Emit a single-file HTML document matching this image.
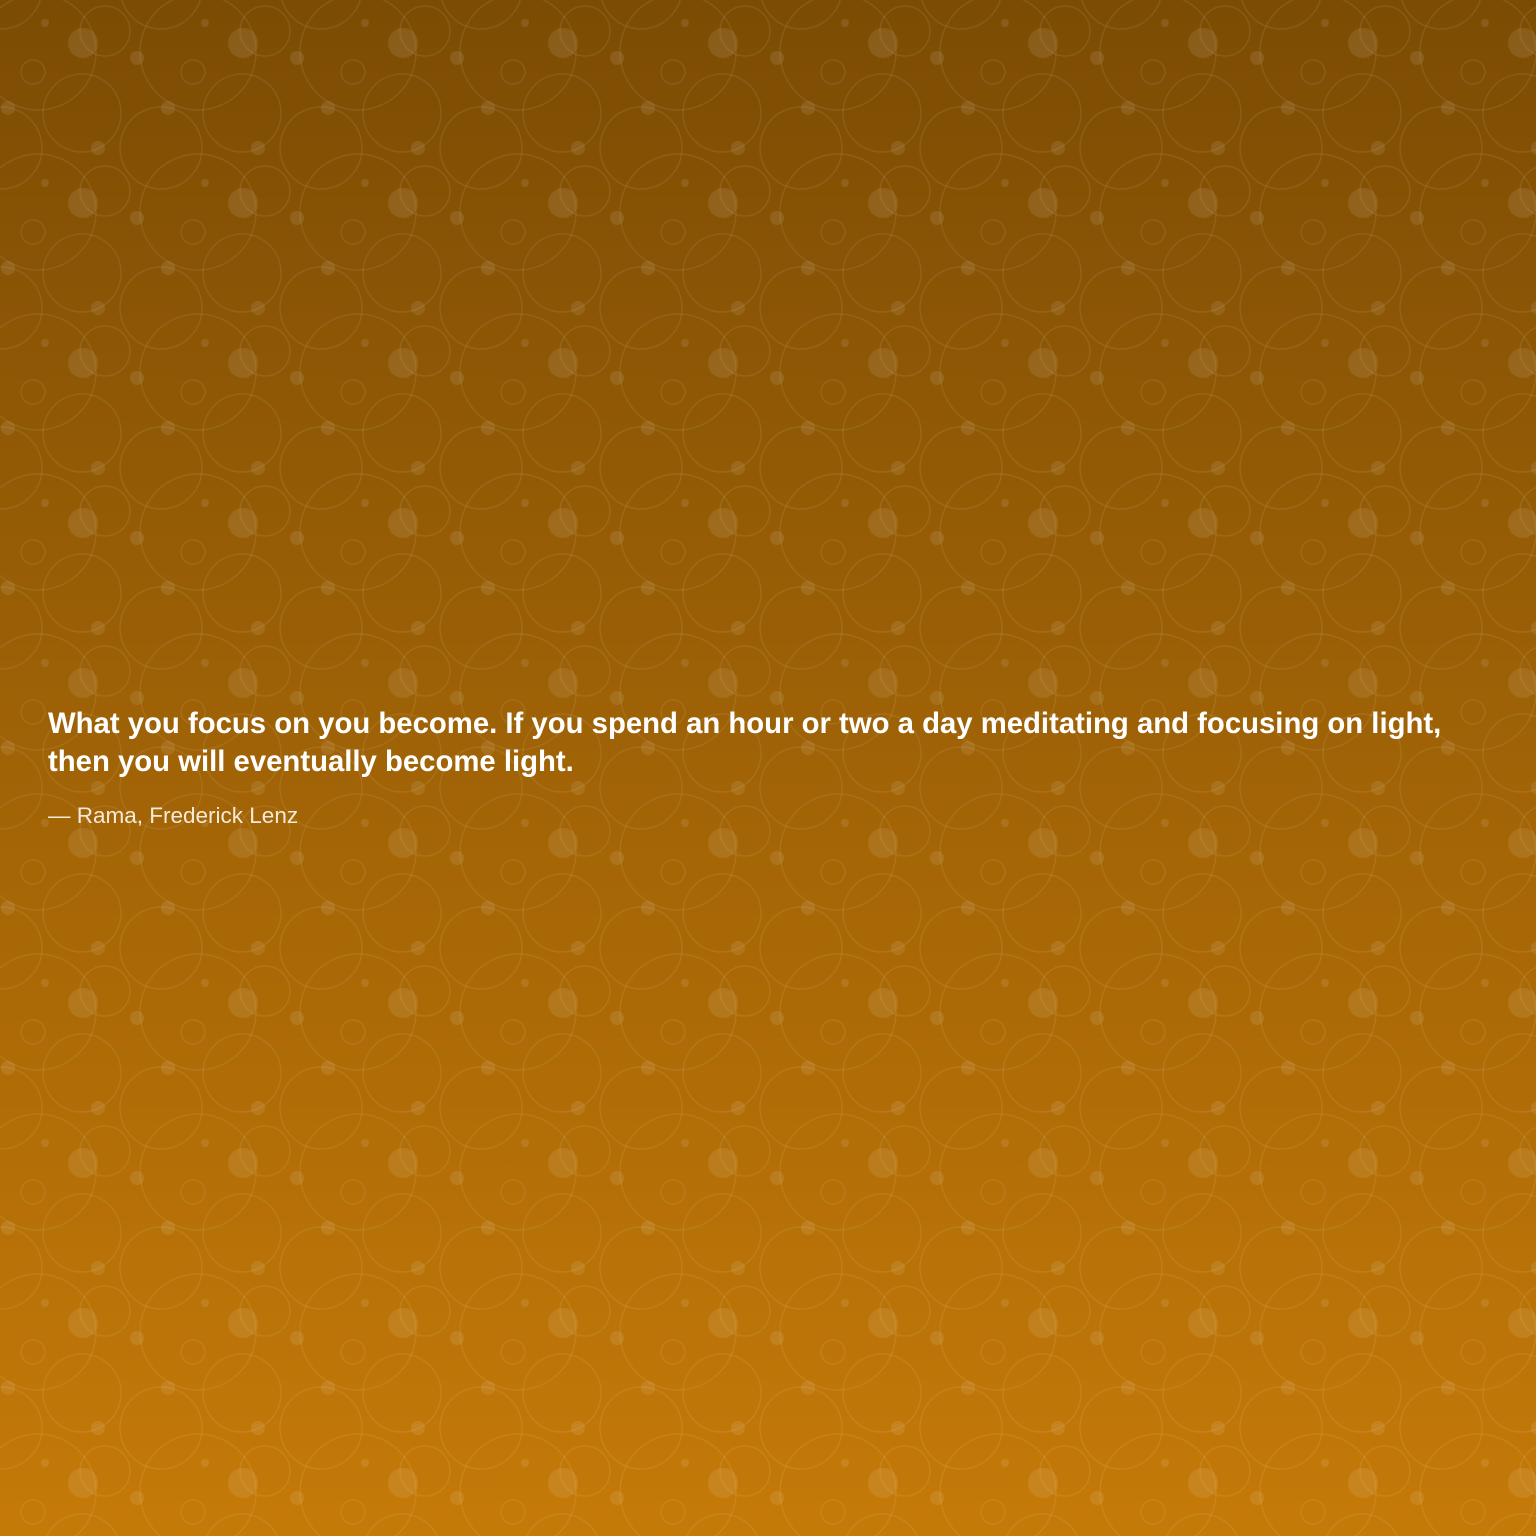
<!DOCTYPE html>
<html><head><meta charset="utf-8"><style>
html,body{margin:0;padding:0}
body{width:1536px;height:1536px;position:relative;overflow:hidden;background:linear-gradient(#7c4c04,#c57a08);font-family:"Liberation Sans",sans-serif}
svg.bg{position:absolute;left:0;top:0}
.q{position:absolute;left:48px;top:705px;width:1400px;color:#fff;font-size:29.3px;font-weight:bold;line-height:38px}
.a{position:absolute;left:48px;top:803px;color:#f6ead8;font-size:22.5px}
</style></head><body>
<svg class="bg" width="1536" height="1536">
<defs><pattern id="p" width="160" height="160" patternUnits="userSpaceOnUse">
<g fill="none" stroke="rgba(255,255,255,0.08)" stroke-width="1.5">
<circle cx="82" cy="113" r="39"/><circle cx="1" cy="148" r="41"/><circle cx="161" cy="148" r="41"/>
<circle cx="105" cy="31" r="25"/><circle cx="33" cy="72" r="12"/><circle cx="38" cy="52" r="58"/>
<circle cx="198" cy="52" r="58"/><circle cx="38" cy="212" r="58"/><circle cx="1" cy="-12" r="41"/><circle cx="161" cy="-12" r="41"/>
</g>
<g fill="rgba(255,255,255,0.09)">
<circle cx="83" cy="43" r="15"/><circle cx="45" cy="23" r="4"/><circle cx="137" cy="58" r="7"/>
<circle cx="8" cy="108" r="7"/><circle cx="168" cy="108" r="7"/><circle cx="98" cy="148" r="7"/><circle cx="98" cy="-12" r="7"/>
</g></pattern></defs>
<rect width="1536" height="1536" fill="url(#p)"/>
</svg>
<div class="q">What you focus on you become. If you spend an hour or two a day meditating and focusing on light,<br>then you will eventually become light.</div>
<div class="a">— Rama, Frederick Lenz</div>
</body></html>
